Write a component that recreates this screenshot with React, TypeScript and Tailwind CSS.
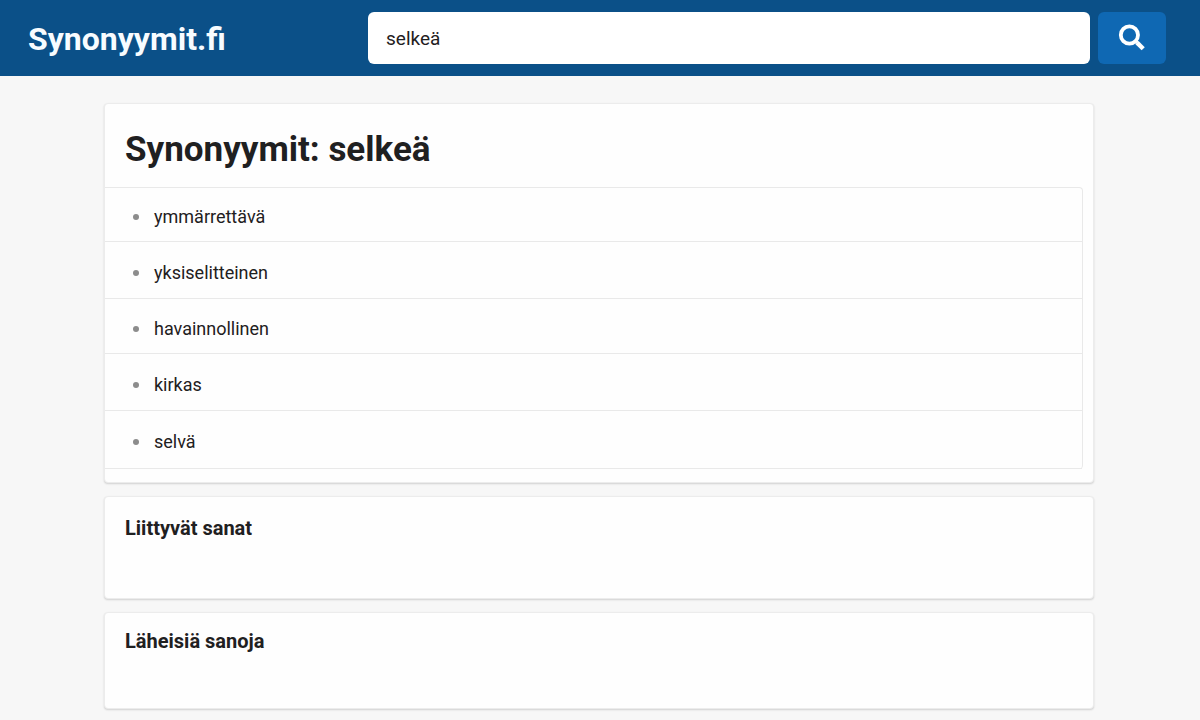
const synonyms = [
  { word: "ymmärrettävä", height: "h-[54px]" },
  { word: "yksiselitteinen", height: "h-[57px]" },
  { word: "havainnollinen", height: "h-[55px]" },
  { word: "kirkas", height: "h-[57px]" },
  { word: "selvä", height: "h-[58px]" },
];

const card = "rounded border border-[#ececec] bg-[#fefefe] shadow-[0_1px_2px_rgba(0,0,0,0.16)]";

export default function App() {
  return (
    <div className="min-h-screen bg-[#f7f7f7] font-['Roboto',sans-serif] text-[#1f2021]">
      <header className="flex h-[76px] items-center bg-[#0b5088] pr-[34px] pl-7">
        <div className="w-[340px] shrink-0 pt-px">
          <a href="#" className="text-[32px] leading-10 font-bold text-[#f8fcff]">Synonyymit.fi</a>
        </div>
        <form className="flex flex-1 gap-2" onSubmit={(e) => e.preventDefault()}>
          <input
            type="text"
            aria-label="Hae synonyymejä"
            defaultValue="selkeä"
            className="h-[52px] min-w-0 flex-1 rounded-md bg-white px-[18px] pt-px text-[19px] outline-none"
          />
          <button type="submit" aria-label="Hae" className="flex h-[52px] w-[68px] items-center justify-center rounded-md bg-[#0f68b3] text-white">
            <svg viewBox="0 0 28 28" className="size-7" fill="none" stroke="currentColor" aria-hidden="true">
              <circle cx="11.4" cy="11" r="8.6" strokeWidth="3.8" />
              <path d="M17.2 16.8L19.2 18.8" strokeWidth="3.6" />
              <path d="M19 18.6L25.2 24.8" strokeWidth="4.4" />
            </svg>
          </button>
        </form>
      </header>
      <main className="mr-[106px] ml-[104px] flex flex-col gap-[13px] pt-[27px] pb-[10px]">
        <section className={`${card} pb-[13px]`}>
          <h1 className="px-5 pt-[22px] pb-[13px] text-[35px] leading-12 font-bold">Synonyymit: selkeä</h1>
          <ul className="mr-[10px] rounded-r-sm border-t border-r border-[#e9e9e9]">
            {synonyms.map(({ word, height }) => (
              <li key={word} className={`${height} flex items-center gap-[15px] border-b border-[#e9e9e9] pt-[5px] pl-7 text-lg`}>
                <span className="size-1.5 rounded-full bg-[#8c8c8c]" />
                {word}
              </li>
            ))}
          </ul>
        </section>
        <section className={`${card} h-[103px] px-5 pt-[17px]`}>
          <h2 className="text-xl leading-7 font-bold">Liittyvät sanat</h2>
        </section>
        <section className={`${card} h-[97px] px-5 pt-[14px]`}>
          <h2 className="text-xl leading-7 font-bold">Läheisiä sanoja</h2>
        </section>
      </main>
    </div>
  );
}
